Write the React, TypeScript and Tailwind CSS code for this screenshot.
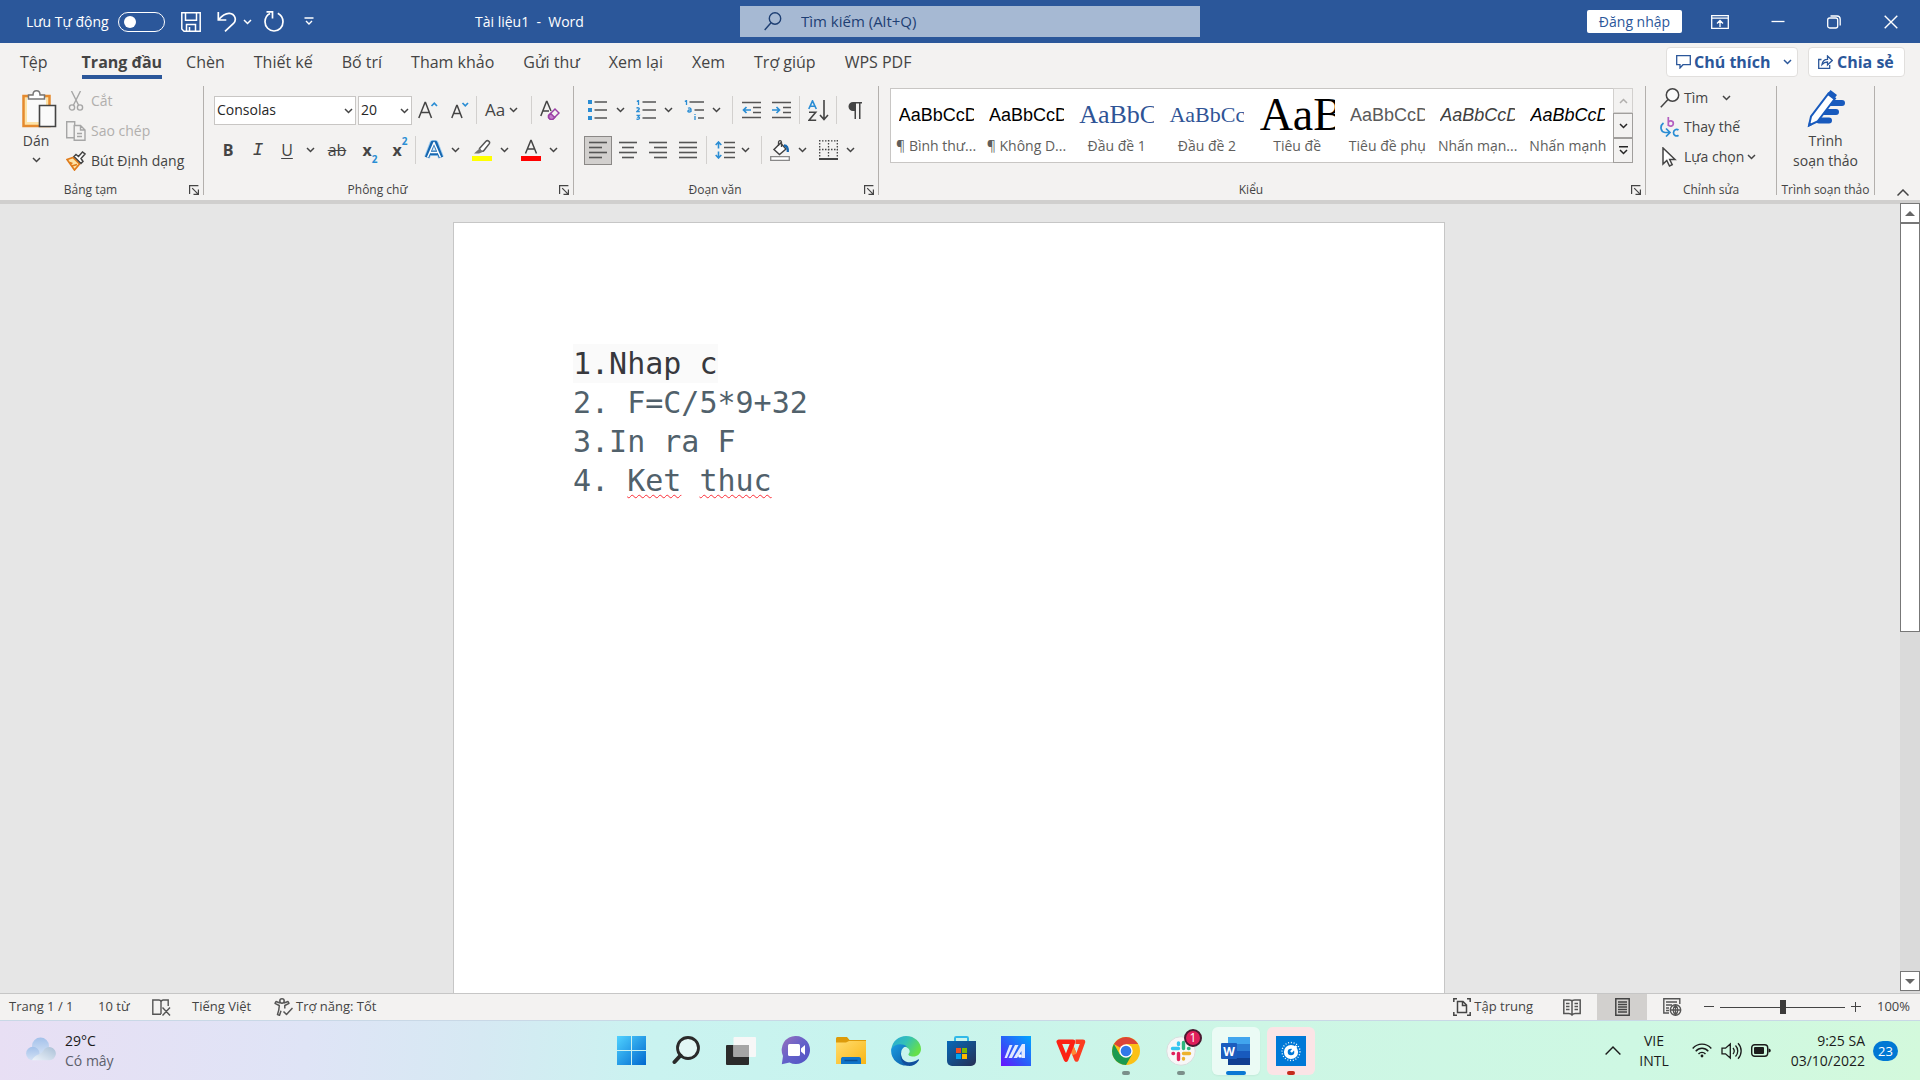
import React from "react";

type Kids = { children?: React.ReactNode; className?: string };

/* ---------- shared pieces ---------- */

function Chevron({ className = "" }: { className?: string }) {
  return (
    <svg className={`shrink-0 ${className}`} width="9" height="6" viewBox="0 0 9 6" fill="none" stroke="currentColor" strokeWidth="1.5" aria-hidden="true">
      <path d="M1 1l3.5 3.5L8 1" />
    </svg>
  );
}

function Tool({ label, className = "w-7", children }: Kids & { label: string }) {
  return (
    <button type="button" aria-label={label} className={`flex h-[30px] shrink-0 items-center justify-center ${className}`}>
      {children}
    </button>
  );
}

function Drop({ label, className = "w-4" }: { label: string; className?: string }) {
  return (
    <button type="button" aria-label={label} className={`flex h-[30px] shrink-0 items-center justify-center ${className}`}>
      <Chevron />
    </button>
  );
}

function Sep({ className = "" }: { className?: string }) {
  return <span className={`h-7 w-px shrink-0 bg-[#d2d0ce] ${className}`} />;
}

function Launcher() {
  return (
    <button type="button" aria-label="Thêm tùy chọn" className="absolute right-1 bottom-0">
      <svg width="10" height="10" viewBox="0 0 10 10" fill="none" stroke="#444" strokeWidth="1.2">
        <path d="M.6 9V.6H9.4M3.2 3.2L8.6 8.6M9.4 4.5v4.9H4.5" />
      </svg>
    </button>
  );
}

function Group({ title, className = "", launcher = false, children }: Kids & { title: string; launcher?: boolean }) {
  return (
    <section className={`relative flex h-[109px] flex-col border-r border-[#b3b0ad] ${className}`}>
      <div className="h-[96px] shrink-0">{children}</div>
      <h2 className="shrink-0 text-center text-xs leading-4 whitespace-nowrap text-[#444]">{title}</h2>
      {launcher && <Launcher />}
    </section>
  );
}

function Lines({ rows, className = "" }: { rows: number[][]; className?: string }) {
  return (
    <svg className={className} width="18" height="18" viewBox="0 0 18 18" stroke="#555" strokeWidth="1.6" aria-hidden="true">
      {rows.map(([a, b], i) => (
        <path key={i} d={`M${a} ${1.5 + i * 5}H${b}`} />
      ))}
    </svg>
  );
}

/* ---------- title bar ---------- */

function TitleBar() {
  return (
    <header className="grid h-[43px] grid-cols-[740fr_460fr_720fr] items-center bg-[#2b579a] text-sm text-white">
      <div className="flex items-center pl-[26px]">
        <label htmlFor="autosave" className="w-[92px] shrink-0 whitespace-nowrap">Lưu Tự động</label>
        <input
          id="autosave"
          type="checkbox"
          role="switch"
          className="h-5 w-[47px] shrink-0 appearance-none rounded-full border border-white before:mt-[3px] before:ml-[5px] before:block before:size-3 before:rounded-full before:bg-white"
        />
        <button type="button" aria-label="Lưu" className="ml-4">
          <svg width="20" height="20" viewBox="0 0 20 20" fill="none" stroke="#fff" strokeWidth="1.5">
            <path d="M.8.8h18.4v18.4H3L.8 17zM4.5.8v7.4h11V.8M5.5 19v-6.5h9V19M8.5 15v4" />
          </svg>
        </button>
        <button type="button" aria-label="Hoàn tác" className="ml-4">
          <svg width="20" height="21" viewBox="0 0 20 21" fill="none" stroke="#fff" strokeWidth="1.7">
            <path d="M1.3 1v8h8M1.5 8.7C5 4.5 8.5 2 12.5 2.3c5.500.5 7.500 6.500 4 10.200L8 20.300" />
          </svg>
        </button>
        <button type="button" aria-label="Tùy chọn hoàn tác" className="ml-1.5"><Chevron /></button>
        <button type="button" aria-label="Lặp lại" className="ml-3">
          <svg width="20" height="21" viewBox="0 0 20 21" fill="none" stroke="#fff" strokeWidth="1.7">
            <path d="M2.500.9h6v6.600M6 2.400C2.800 4 1 7 1 10.800c0 5 4 9.200 9 9.200s9-4 9-9.200c0-4-2-7-5.200-8.600" />
          </svg>
        </button>
        <button type="button" aria-label="Tùy chỉnh thanh công cụ" className="ml-5">
          <svg width="10" height="9" viewBox="0 0 10 9" fill="none" stroke="#fff" strokeWidth="1.4">
            <path d="M.5 1h9M2 4l3 3 3-3" />
          </svg>
        </button>
        <h1 className="ml-[161px] whitespace-pre">Tài liệu1  -  Word</h1>
      </div>
      <label className="flex h-[31px] items-center bg-[#a6b9d3] pl-6 text-[15px] text-[#1e3f73]">
        <svg width="18" height="19" viewBox="0 0 18 19" fill="none" stroke="currentColor" strokeWidth="1.4" aria-hidden="true">
          <circle cx="11" cy="6.500" r="5.700" />
          <path d="M7 10.700L.7 18" />
        </svg>
        <input type="search" aria-label="Tìm kiếm" placeholder="Tìm kiếm (Alt+Q)" className="ml-[19px] min-w-0 flex-1 bg-transparent outline-none placeholder:text-[#1e3f73]" />
      </label>
      <div className="flex items-center justify-end pr-[22px]">
        <button type="button" className="mr-[29px] h-[23px] w-[95px] rounded-xs bg-white text-[#2b579a]">Đăng nhập</button>
        <button type="button" aria-label="Tùy chọn hiển thị dải băng" className="mr-[42px]">
          <svg width="18" height="14" viewBox="0 0 18 14" fill="none" stroke="#fff" strokeWidth="1.3">
            <path d="M.7.7h16.600v12.600H.7zM.7 3.200h16.600M9 12V5.700M6 8.500l3-3 3 3" />
          </svg>
        </button>
        <button type="button" aria-label="Thu nhỏ" className="mr-[42px]">
          <svg width="14" height="14" viewBox="0 0 14 14" stroke="#fff" strokeWidth="1.3"><path d="M.5 6.500h13" /></svg>
        </button>
        <button type="button" aria-label="Khôi phục" className="mr-[43px]">
          <svg width="14" height="14" viewBox="0 0 14 14" fill="none" stroke="#fff" strokeWidth="1.3">
            <rect x=".7" y="3" width="10" height="10" rx="2" />
            <path d="M3.500 1h6.500A3.200 3.200 0 0113.200 4v6.500" />
          </svg>
        </button>
        <button type="button" aria-label="Đóng">
          <svg width="14" height="14" viewBox="0 0 14 14" stroke="#fff" strokeWidth="1.4"><path d="M.7.7l12.600 12.600M13.300.7L.7 13.300" /></svg>
        </button>
      </div>
    </header>
  );
}

/* ---------- tabs ---------- */

const tabs = ["Chèn", "Thiết kế", "Bố trí", "Tham khảo", "Gửi thư", "Xem lại", "Xem", "Trợ giúp", "WPS PDF"];

function Tabs() {
  return (
    <nav className="flex h-[43px] items-start justify-between pr-[15px] pl-5 text-base text-[#444]">
      <div className="flex items-start gap-[29px] pt-1">
        <button type="button" className="mr-[5px] h-[30px]">Tệp</button>
        <button type="button" className="-mr-[5px] h-8 border-b-4 border-[#2b579a] pt-0.5 font-bold whitespace-nowrap">Trang đầu</button>
        {tabs.map((t) => (
          <button key={t} type="button" className="h-[30px] whitespace-nowrap">{t}</button>
        ))}
      </div>
      <div className="flex gap-[10px] pt-1 font-bold whitespace-nowrap text-[#2b579a]">
        <button type="button" className="flex h-[30px] w-[132px] items-center rounded-sm border border-[#e1dfdd] bg-white pl-[9px]">
          <svg width="15" height="14" viewBox="0 0 15 14" fill="none" stroke="currentColor" strokeWidth="1.3"><path d="M.7.7h13.600v9H7L4 13V9.700H.7z" /></svg>
          <span className="ml-[3px]">Chú thích</span>
          <Chevron className="mr-[5px] ml-auto" />
        </button>
        <button type="button" className="flex h-[30px] w-[97px] items-center rounded-sm border border-[#e1dfdd] bg-white pl-[9px]">
          <svg width="15" height="14" viewBox="0 0 15 14" fill="none" stroke="currentColor" strokeWidth="1.3"><path d="M3.500 4.500H.7v8.800h11V10M4 9.500C4.500 6 7 4.300 9.500 4.300V1l4.700 4.500L9.500 10V7C7 7 5.500 7.800 4 9.500z" /></svg>
          <span className="ml-1">Chia sẻ</span>
        </button>
      </div>
    </nav>
  );
}

/* ---------- ribbon groups ---------- */

function Clipboard() {
  return (
    <Group title="Bảng tạm" launcher className="w-[204px] shrink-0 [&>h2]:mr-[22px]">
      <div className="flex pl-[17px]">
        <button type="button" className="flex w-[38px] shrink-0 flex-col items-center pt-1 text-sm text-[#444]">
          <svg className="ml-1.5 shrink-0" width="35" height="38" viewBox="0 0 35 38" fill="none">
            <path d="M1.500 6h26v30h-26z" fill="#fde3a7" stroke="#e58a2e" strokeWidth="2.500" />
            <path d="M5 8h19v24H5z" fill="#fafafa" />
            <path d="M6.500 9V5h4.500c0-2.500 1.500-4.200 3.500-4.200S18 2.500 18 5h4.500v4z" fill="#fff" stroke="#777" strokeWidth="1.500" />
            <path d="M17.500 15.500h16v21h-16z" fill="#fafafa" stroke="#444" strokeWidth="1.600" />
          </svg>
          <span className="mt-[3px] leading-5">Dán</span>
          <Chevron className="mt-1.5" />
        </button>
        <div className="ml-[10px] flex flex-col text-sm text-[#444]">
          <button type="button" className="flex h-[30px] items-center text-[#b1afad]">
            <svg className="mx-[3px]" width="16" height="20" viewBox="0 0 16 20" fill="none" stroke="#a6a6a6" strokeWidth="1.400">
              <path d="M3.500 0l7 14M12.500 0l-7 14" /><circle cx="4" cy="16.500" r="2.600" /><circle cx="12" cy="16.500" r="2.600" />
            </svg>
            <span className="ml-1">Cắt</span>
          </button>
          <button type="button" className="flex h-[30px] items-center text-[#b1afad]">
            <svg className="mx-px" width="20" height="20" viewBox="0 0 20 20" fill="#f3f2f1" stroke="#a6a6a6" strokeWidth="1.400">
              <path d="M.7.7h8v16H.7z" /><path d="M8.200 4.500h6.300l4.500 4.500v10.200H8.200zM14.500 4.500V9H19M11 12.500h5M11 15.500h5" />
            </svg>
            <span className="ml-1">Sao chép</span>
          </button>
          <button type="button" className="flex h-[30px] items-center whitespace-nowrap">
            <svg className="mx-px" width="20" height="20" viewBox="0 0 20 20" fill="none">
              <path d="M1 8.500l6-2 6.500 6.500-5 6z" fill="#fde3a7" stroke="#e07b1a" strokeWidth="1.700" />
              <path d="M3.500 11.500l3 1M6 15l5-1.500" stroke="#e07b1a" strokeWidth="1.400" />
              <path d="M8 5.500l2-2 2.500 2L16.500 1 19 3l-4 4.500 2 3-2 2z" fill="#fff" stroke="#444" strokeWidth="1.500" />
            </svg>
            <span className="ml-1">Bút Định dạng</span>
          </button>
        </div>
      </div>
    </Group>
  );
}

function Combo({ label, value, className }: { label: string; value: string; className: string }) {
  return (
    <div className={`relative h-[29px] shrink-0 ${className}`}>
      <select aria-label={label} className="size-full appearance-none border border-[#c8c6c4] bg-white pl-0.5 text-sm text-[#262626]">
        <option>{value}</option>
      </select>
      <Chevron className="pointer-events-none absolute top-3 right-[3px]" />
    </div>
  );
}

function FontGroup() {
  return (
    <Group title="Phông chữ" launcher className="w-[370px] shrink-0 text-[#444] [&>h2]:mr-[22px]">
      <div className="flex h-[44px] items-center pt-1 pl-[10px]">
        <Combo label="Phông" value="Consolas" className="w-[142px]" />
        <Combo label="Cỡ" value="20" className="ml-0.5 w-[54px]" />
        <Tool label="Tăng cỡ phông" className="w-8">
          <svg width="20" height="18" viewBox="0 0 20 18" fill="none" stroke="#444" strokeWidth="1.500"><path d="M.8 17L7 1.500h.5L13.500 17M3 11.500h8.500" /><path d="M13.500 5l2.800-2.800L19 5" stroke="#2a8dd4" strokeWidth="1.700" /></svg>
        </Tool>
        <Tool label="Giảm cỡ phông" className="w-8">
          <svg width="18" height="18" viewBox="0 0 18 18" fill="none" stroke="#444" strokeWidth="1.500"><path d="M.8 17L5.700 4.500h.5L11 17M2.500 12.500h7" /><path d="M11.500 2l2.800 2.800L17 2" stroke="#2a8dd4" strokeWidth="1.700" /></svg>
        </Tool>
        <Sep />
        <button type="button" className="flex h-[30px] w-[54px] items-center gap-1 pl-2 text-[17px]">Aa<Chevron /></button>
        <Sep />
        <Tool label="Xóa định dạng" className="w-9">
          <svg width="20" height="20" viewBox="0 0 20 20" fill="none" stroke="#444" strokeWidth="1.500"><path d="M.8 16L6.500 1.500H7L11 11M3 11h6" /><path d="M8.500 15.500l6.500-6.500 4 4-6.500 6.500h-2L8.500 17.500z" fill="#f3f2f1" stroke="#9b3fa5" /><path d="M8.700 15.500l2-2 4 4-2.200 2h-2l-1.800-1.800z" fill="#c47fcc" stroke="#9b3fa5" /></svg>
        </Tool>
      </div>
      <div className="flex h-10 items-center pl-[9px]">
        <Tool label="Đậm" className="w-[30px]"><b className="text-base">B</b></Tool>
        <Tool label="Nghiêng" className="w-[30px]"><i className="font-['Liberation_Mono'] text-lg">I</i></Tool>
        <Tool label="Gạch dưới"><span className="text-base underline underline-offset-2">U</span></Tool>
        <Drop label="Kiểu gạch dưới" className="w-[18px]" />
        <Tool label="Gạch ngang" className="w-9"><s className="px-px text-base">ab</s></Tool>
        <Tool label="Chỉ số dưới" className="ml-px w-7">
          <span className="flex items-end leading-5"><b className="text-base">x</b><b className="mb-[-7px] text-[10px] text-[#2a8dd4]">2</b></span>
        </Tool>
        <Tool label="Chỉ số trên" className="ml-px w-[30px]">
          <span className="flex items-start leading-5"><b className="text-base">x</b><b className="mt-[-7px] text-[10px] text-[#2a8dd4]">2</b></span>
        </Tool>
        <Sep />
        <Tool label="Hiệu ứng văn bản" className="ml-0.5 w-8">
          <svg width="20" height="20" viewBox="0 0 20 20" fill="none" strokeLinejoin="round"><path d="M3 17.500L8.500 3h3L17 17.500M6 13h8" stroke="#9fcdf0" strokeWidth="6" /><path d="M3 17.500L8.700 3h2.600L17 17.500M6 13h8" stroke="#1667b0" strokeWidth="4.400" /><path d="M3.500 17.500L10 2.500l6.500 15M6.500 12.500h7" stroke="#fff" strokeWidth="1.500" /></svg>
        </Tool>
        <Drop label="Thêm hiệu ứng" className="w-[10px]" />
        <Tool label="Màu tô sáng" className="ml-2 w-7">
          <svg width="20" height="22" viewBox="0 0 20 22" fill="none"><path d="M0 17h20v5H0z" fill="#ff0" /><path d="M7.500 9.500L14 2.300c1.500-1.500 4.500 0 3.300 2.300L11.500 12l-3 .5z" fill="#fff" stroke="#555" strokeWidth="1.500" /><path d="M7.500 9.500L11 12.700 7 14.500H2z" fill="#777" /></svg>
        </Tool>
        <Drop label="Chọn màu tô sáng" />
        <Tool label="Màu phông" className="ml-[5px] w-7">
          <svg width="20" height="22" viewBox="0 0 20 22" fill="none"><path d="M0 17h20v5H0z" fill="red" /><path d="M4.500 14.500L9.800 1.500h.4l5.300 13M6.500 10h7" stroke="#444" strokeWidth="1.500" /></svg>
        </Tool>
        <Drop label="Chọn màu phông" />
      </div>
    </Group>
  );
}

const blue = "#2a8dd4";

function Paragraph() {
  return (
    <Group title="Đoạn văn" launcher className="w-[305px] shrink-0 text-[#444] [&>h2]:mr-[22px]">
      <div className="flex h-[44px] items-center pt-1 pl-[10px]">
        <Tool label="Dấu đầu dòng">
          <svg width="20" height="20" viewBox="0 0 20 20"><path d="M0 0h4v4H0zM0 8h4v4H0zM0 16h4v4H0z" fill={blue} /><path d="M6.500 2H19M6.500 10H19M6.500 18H19" stroke="#555" strokeWidth="1.500" /></svg>
        </Tool>
        <Drop label="Kiểu dấu đầu dòng" />
        <Tool label="Đánh số" className="ml-1 w-7">
          <svg width="20" height="20" viewBox="0 0 20 20"><path d="M.8 1.500L2.500.5V5M.5 8.200c1-.8 3-.5 2.800.8L.8 11.500h3M.5 15.300h2.800L2 17c2 0 2 2.300-.3 2.300L.5 19" stroke={blue} strokeWidth="1.300" fill="none" /><path d="M6.500 2H20M6.500 10H20M6.500 18H20" stroke="#555" strokeWidth="1.500" /></svg>
        </Tool>
        <Drop label="Kiểu đánh số" />
        <Tool label="Danh sách đa mức" className="ml-1 w-7">
          <svg width="20" height="20" viewBox="0 0 20 20"><path d="M.8 1.500L2.500.5V5M4 8.300c1.500-.8 3-.3 3 1V12M7 10c-4-.3-3.700 2.200-1.800 2 .8 0 1.800-.6 1.800-1.300M11 14v1M11 16v4" stroke={blue} strokeWidth="1.300" fill="none" /><path d="M5.500 2H20M10.500 10H20M14 18h6" stroke="#555" strokeWidth="1.500" /></svg>
        </Tool>
        <Drop label="Kiểu đa mức" />
        <Sep className="ml-2" />
        <Tool label="Giảm thụt lề" className="ml-0.5 w-8">
          <svg width="19" height="18" viewBox="0 0 19 18" fill="none" stroke="#555" strokeWidth="1.500"><path d="M0 1.500h19M11 6.500h8M11 11.500h8M0 16.500h19" /><path d="M9 9H1.500M4.500 6L1.500 9l3 3" stroke={blue} strokeWidth="1.700" /></svg>
        </Tool>
        <Tool label="Tăng thụt lề">
          <svg width="19" height="18" viewBox="0 0 19 18" fill="none" stroke="#555" strokeWidth="1.500"><path d="M0 1.500h19M11 6.500h8M11 11.500h8M0 16.500h19" /><path d="M0 9h7.500M4.500 6l3 3-3 3" stroke={blue} strokeWidth="1.700" /></svg>
        </Tool>
        <Sep className="ml-1" />
        <Tool label="Sắp xếp" className="w-9">
          <svg width="21" height="21" viewBox="0 0 21 21" fill="none" strokeWidth="1.600"><path d="M.8 9L4.500.8 8.300 9M2 6.300h5" stroke={blue} /><path d="M1 12.300h6.700L1 20.200h7.200M16 0v19M12 15l4 4.500 4-4.500" stroke="#444" /></svg>
        </Tool>
        <Sep />
        <Tool label="Hiện dấu đoạn" className="w-9">
          <svg width="14" height="17" viewBox="0 0 14 17" fill="#444"><path d="M5 0h9v1.500h-1.500V17H11V1.500H8V17H6.500V9H5a4.500 4.500 0 010-9z" /></svg>
        </Tool>
      </div>
      <div className="flex h-10 items-center pl-[10px]">
        <button type="button" aria-label="Căn trái" className="flex h-[29px] w-7 shrink-0 items-center justify-center border border-[#8a8886] bg-[#d2d0ce]">
          <Lines rows={[[0, 18], [0, 13], [0, 18], [0, 13]]} />
        </button>
        <Tool label="Căn giữa" className="ml-0.5 w-7"><Lines rows={[[0, 18], [3, 15], [0, 18], [3, 15]]} /></Tool>
        <Tool label="Căn phải" className="ml-0.5 w-7"><Lines rows={[[0, 18], [5, 18], [0, 18], [5, 18]]} /></Tool>
        <Tool label="Căn đều" className="ml-0.5 w-7"><Lines rows={[[0, 18], [0, 18], [0, 18], [0, 18]]} /></Tool>
        <Sep className="ml-1" />
        <Tool label="Giãn cách dòng" className="ml-1 w-7">
          <svg width="20" height="18" viewBox="0 0 20 18" fill="none" stroke="#555" strokeWidth="1.600"><path d="M9 1.500h11M9 6.500h11M9 11.500h11M9 16.500h11" /><path d="M3.500 1v6.500M.7 4l2.800-3 2.800 3M3.500 10.500V17M.7 14l2.800 3 2.800-3" stroke={blue} /></svg>
        </Tool>
        <Drop label="Tùy chọn giãn cách" className="w-3" />
        <Sep className="ml-[10px]" />
        <Tool label="Tô bóng" className="ml-1 w-7">
          <svg width="20" height="21" viewBox="0 0 20 21" fill="none"><path d="M.7 16.700h18.600v3.600H.7z" fill="#fff" stroke="#888" strokeWidth="1.300" /><path d="M4 9.500L10.500 3l5.500 6-6.500 5.500z" fill="#fff" stroke="#444" strokeWidth="1.500" /><path d="M8.500 6V2.500c0-2.500 3-2.500 3 0V7" stroke="#444" strokeWidth="1.300" /><path d="M14 5.500c3 0 4 2 3.800 6.500" stroke="#1667b0" strokeWidth="2.300" /></svg>
        </Tool>
        <Drop label="Màu tô bóng" />
        <Tool label="Viền" className="ml-1 w-7">
          <svg width="19" height="20" viewBox="0 0 19 20" fill="none" stroke="#444" strokeWidth="1.300"><path d="M0 .8h19M0 9.500h19M.7 0v18M9.500 0v18M18.300 0v18" strokeDasharray="1.500 1.500" /><path d="M0 19h19" strokeWidth="2" /></svg>
        </Tool>
        <Drop label="Kiểu viền" />
      </div>
    </Group>
  );
}

const styleItems = [
  { name: "¶ Bình thư...", sample: "AaBbCcD", look: "text-lg text-black" },
  { name: "¶ Không D...", sample: "AaBbCcD", look: "text-lg text-black" },
  { name: "Đầu đề 1", sample: "AaBbC", look: "font-['Liberation_Serif'] text-[26px] text-[#2f5496]" },
  { name: "Đầu đề 2", sample: "AaBbCc", look: "font-['Liberation_Serif'] text-[22px] text-[#2f5496]" },
  { name: "Tiêu đề", sample: "AaB", look: "font-['Liberation_Serif'] text-[46px] text-black" },
  { name: "Tiêu đề phụ", sample: "AaBbCcD", look: "text-lg text-[#5a5a5a]" },
  { name: "Nhấn mạn...", sample: "AaBbCcD", look: "text-lg text-[#404040] italic" },
  { name: "Nhấn mạnh", sample: "AaBbCcD", look: "text-lg text-black italic" },
];

function Styles() {
  return (
    <Group title="Kiểu" launcher className="min-w-0 flex-1 [&>h2]:mr-[22px]">
      <div className="pt-0.5 pr-3 pl-[11px]">
        <div className="flex h-[75px] border border-[#c8c6c4] bg-white">
          <div className="flex min-w-0 flex-1">
            {styleItems.map((s) => (
              <button key={s.name} type="button" className="flex min-w-0 flex-1 flex-col items-center overflow-hidden">
                <span className={`mt-1.5 h-10 w-[75px] shrink-0 overflow-hidden text-left leading-10 whitespace-nowrap ${s.look.includes("Serif") ? "" : "font-['Liberation_Sans']"} ${s.look}`}>{s.sample}</span>
                <span className="mt-px shrink-0 text-sm leading-5 whitespace-nowrap text-[#605e5c]">{s.name}</span>
              </button>
            ))}
          </div>
          <div className="-my-px -mr-px flex w-5 flex-col text-[#262626]">
            <button type="button" aria-label="Lên" className="flex flex-1 items-center justify-center border border-[#d2d0ce] bg-[#f3f2f1] text-[#b1afad]"><Chevron className="rotate-180" /></button>
            <button type="button" aria-label="Xuống" className="flex flex-1 items-center justify-center border border-[#a19f9d] bg-[#f3f2f1]"><Chevron /></button>
            <button type="button" aria-label="Xem thêm" className="flex flex-1 items-center justify-center border border-[#a19f9d] bg-[#f3f2f1]">
              <svg width="9" height="9" viewBox="0 0 9 9" fill="none" stroke="currentColor" strokeWidth="1.500"><path d="M0 .8h9M1 4l3.500 3.500L8 4" /></svg>
            </button>
          </div>
        </div>
      </div>
    </Group>
  );
}

function Editing() {
  return (
    <Group title="Chỉnh sửa" className="w-[131px] shrink-0 text-sm text-[#444]">
      <div className="flex flex-col pl-[14px]">
        <button type="button" className="flex h-6 items-center">
          <svg width="20" height="20" viewBox="0 0 20 20" fill="none" stroke="#444" strokeWidth="1.500"><circle cx="12.500" cy="7" r="6.200" fill="#fafafa" /><path d="M8 11.500L.8 19.200" /></svg>
          <span className="ml-1">Tìm</span><Chevron className="ml-[14px]" />
        </button>
        <button type="button" className="mt-0.5 flex h-[30px] items-center">
          <svg width="20" height="20" viewBox="0 0 20 20" fill="none" strokeWidth="1.700"><path d="M8.300 0v9M8.300 5.500c1-2.500 5-2 5 1s-4 3.500-5 1.200" stroke="#b45fc0" /><path d="M18.500 13c-2-1.500-5-.3-5 2.700s3 4 5 2.500M3.500 6c-4 3-3 9 1.500 9.500h4M6 11.500l4 4-4 4" stroke={blue} /></svg>
          <span className="ml-1">Thay thế</span>
        </button>
        <button type="button" className="flex h-[29px] items-center whitespace-nowrap">
          <svg width="20" height="20" viewBox="0 0 20 20" fill="#fff" stroke="#444" strokeWidth="1.500"><path d="M3 1v16l3.800-3.500L9.500 19l2.700-1.300L9.700 12.500H15z" /></svg>
          <span className="ml-1">Lựa chọn</span><Chevron className="ml-[3px]" />
        </button>
      </div>
    </Group>
  );
}

function Editor() {
  return (
    <Group title="Trình soạn thảo" className="w-[98px] shrink-0 text-sm text-[#444]">
      <button type="button" className="flex w-full flex-col items-center pt-[3px]">
        <svg width="38" height="39" viewBox="0 0 38 39">
          <path d="M22 14h13M17 23h12M12 31.500h10" stroke="#185abd" strokeWidth="6" strokeLinecap="round" />
          <path d="M2 36.500l2-9L21.500 4.500l6.500 5L10.500 32.500z" fill="#fff" stroke="#185abd" strokeWidth="2" />
          <path d="M20 5.500L23.500 1l6.500 5-3.500 4.500zM1 38l1-5 3.500 2.800z" fill="#185abd" />
        </svg>
        <span className="mt-[3px] leading-5">Trình<br />soạn thảo</span>
      </button>
    </Group>
  );
}

/* ---------- document ---------- */

function Workspace() {
  return (
    <main className="flex min-h-0 flex-1 border-t-4 border-[#d0cfce] bg-[#e6e6e6]">
      <div className="flex min-w-0 flex-1 justify-center overflow-hidden pt-[18px] pr-0.5">
        <article className="w-[992px] border border-b-0 border-[#c6c6c6] bg-white px-[119px] pt-[121px] font-['DejaVu_Sans_Mono'] text-[30px] leading-[39px] text-[#51616b]">
          <p><span className="inline-block bg-[#fafafa] text-[#38383d]">1.Nhap c</span></p>
          <p>2. F=C/5*9+32</p>
          <p>3.In ra F</p>
          <p>
            4. <span className="underline decoration-red-500 decoration-wavy decoration-1 underline-offset-3">Ket</span>{" "}
            <span className="underline decoration-red-500 decoration-wavy decoration-1 underline-offset-3">thuc</span>
          </p>
        </article>
      </div>
      <div className="flex w-5 shrink-0 flex-col bg-[#dadada] pb-0.5">
        <button type="button" aria-label="Cuộn lên" className="-mt-px flex h-5 shrink-0 items-center justify-center border border-[#777] bg-white">
          <svg width="10" height="5" viewBox="0 0 10 5" fill="#666"><path d="M0 5l5-5 5 5z" /></svg>
        </button>
        <div className="h-[52%] border border-[#777] bg-white" />
        <button type="button" aria-label="Cuộn xuống" className="mt-auto flex h-5 shrink-0 items-center justify-center border border-[#777] bg-white">
          <svg width="10" height="5" viewBox="0 0 10 5" fill="#666"><path d="M0 0l5 5 5-5z" /></svg>
        </button>
      </div>
    </main>
  );
}

/* ---------- status bar ---------- */

function StatusBar() {
  return (
    <footer className="flex h-[27px] shrink-0 items-center justify-between border-t border-[#c6c6c6] bg-[#f3f2f1] text-[13px] whitespace-nowrap text-[#444]">
      <div className="flex items-center pl-[9px]">
        <span className="w-[89px]">Trang 1 / 1</span>
        <span className="w-[54px]">10 từ</span>
        <button type="button" aria-label="Soát lỗi" className="w-10">
          <svg width="19" height="17" viewBox="0 0 19 17" fill="none" stroke="#555" strokeWidth="1.400"><path d="M9 15.300H.8V1h6c1.500 0 2.200 1 2.200 2v12M9 3c0-1 1-2 2.200-2h5v6M10.500 8.500l7.500 8M18 8.500l-7.500 8" /></svg>
        </button>
        <span className="w-[82px]">Tiếng Việt</span>
        <button type="button" className="flex items-center gap-[3px]">
          <svg width="19" height="18" viewBox="0 0 19 18" fill="none" stroke="#555" strokeWidth="1.500" strokeLinejoin="round"><circle cx="8" cy="3" r="2.200" /><path d="M6 5L2 3.500 1 5.300l4.200 2.200c.3 3-.7 6-1.700 9l2 .7 1.500-4.500M10 5l4-1.500 1 1.800-4.200 2.200v3M9.500 13.500l3 3 6-6.500" /></svg>
          Trợ năng: Tốt
        </button>
      </div>
      <div className="flex h-full items-center pr-2.5">
        <button type="button" className="flex items-center gap-[3px]">
          <svg width="18" height="18" viewBox="0 0 18 18" fill="none" stroke="#444" strokeWidth="1.500"><path d="M4 .8H.8V4M14 .8h3.200V4M4 17.200H.8V14M14 17.200h3.200V14M4.500 3.500H10l3.500 3.500v7.500h-9zM9.500 3.500v4h4" /></svg>
          Tập trung
        </button>
        <button type="button" aria-label="Chế độ đọc" className="ml-[14px] flex h-full w-[50px] items-center justify-center">
          <svg width="18" height="17" viewBox="0 0 18 17" fill="none" stroke="#555" strokeWidth="1.500"><path d="M9 2.500v13M.8 1h5.500C8 1 9 1.700 9 2.500 9 1.700 10 1 11.700 1h5.500v13.500h-5c-2 0-3.200 1.500-3.200 1.500s-1.200-1.500-3.200-1.500h-5zM3 4.500h3.500M3 7.500h3.500M3 10.500h3.500M11.500 4.500H15M11.500 7.500H15M11.500 10.500H15" /></svg>
        </button>
        <button type="button" aria-label="Bố trí in" className="flex h-full w-[50px] items-center justify-center bg-[#d2d0ce]">
          <svg width="15" height="18" viewBox="0 0 15 18" fill="none" stroke="#444" strokeWidth="1.500"><path d="M.8.8h13.400v16.400H.8zM3 4h9M3 6.500h9M3 9h9M3 11.500h9M3 14h9" /></svg>
        </button>
        <button type="button" aria-label="Bố trí web" className="flex h-full w-[50px] items-center justify-center">
          <svg width="19" height="18" viewBox="0 0 19 18" fill="none" stroke="#555" strokeWidth="1.400"><path d="M6 15H.8V.8h16V6M3 4h11M3 7h6M3 10h3M3 12.500h3" /><circle cx="12.500" cy="12" r="5.200" fill="#f3f2f1" /><path d="M12.500 7v10M7.500 12h10M12.500 7c-3 3-3 7 0 10 3-3 3-7 0-10" /></svg>
        </button>
        <button type="button" aria-label="Thu nhỏ" className="ml-[7px]"><svg width="10" height="10" viewBox="0 0 10 10" stroke="#444"><path d="M0 4.500h10" /></svg></button>
        <input
          type="range"
          aria-label="Thu phóng"
          defaultValue={50}
          className="mx-1.5 h-4 w-[125px] appearance-none bg-[linear-gradient(#444,#444)] bg-[length:100%_1px] bg-center bg-no-repeat [&::-webkit-slider-thumb]:h-[14px] [&::-webkit-slider-thumb]:w-1.5 [&::-webkit-slider-thumb]:appearance-none [&::-webkit-slider-thumb]:bg-[#3b3a39]"
        />
        <button type="button" aria-label="Phóng to"><svg width="10" height="10" viewBox="0 0 10 10" stroke="#444"><path d="M0 4.500h10M4.500 0v10" /></svg></button>
        <span className="w-[49px] text-right">100%</span>
      </div>
    </footer>
  );
}

/* ---------- taskbar ---------- */

function TaskButton({ label, className = "", dot, children }: Kids & { label: string; dot?: string }) {
  return (
    <button type="button" aria-label={label} className={`relative flex size-12 items-center justify-center rounded-md ${className}`}>
      {children}
      {dot && <span className={`absolute bottom-0 h-1 rounded-full ${dot}`} />}
    </button>
  );
}

function Taskbar() {
  return (
    <footer className="grid h-[60px] shrink-0 grid-cols-[1fr_auto_1fr] items-center border-t border-[#c9d8e6] bg-[linear-gradient(95deg,#e8dff4_0%,#dfe4f6_16%,#d6e9f3_25%,#caf3f0_34%,#c8f4ee_45%,#cdf6e5_65%,#cef8e3_85%,#d3f9dc_100%)] text-sm text-[#1b1b1b]">
      <button type="button" className="flex items-center pl-[26px] text-left">
        <svg className="mb-1" width="30" height="24" viewBox="0 0 30 24">
          <defs>
            <linearGradient id="cl1" x1="0" y1="0" x2="0" y2="1"><stop stopColor="#a3c1ea" /><stop offset="1" stopColor="#d3e1f5" /></linearGradient>
            <linearGradient id="cl2" x1="1" y1="0" x2="0" y2="1"><stop stopColor="#a9bfd6" /><stop offset="1" stopColor="#eef4fb" /></linearGradient>
          </defs>
          <circle cx="14.500" cy="9" r="8.500" fill="url(#cl1)" />
          <circle cx="6.800" cy="16.500" r="6.700" fill="url(#cl1)" />
          <path d="M6 23.200h17.500a6.600 6.600 0 10-6.300-9.200C15 18 9 17 6 23.200z" fill="url(#cl2)" />
        </svg>
        <span className="ml-[9px] leading-5">29°C<br /><span className="text-[#5c5f6b]">Có mây</span></span>
      </button>
      <nav className="flex gap-[7px] pl-0.5">
        <TaskButton label="Bắt đầu">
          <svg width="29" height="29" viewBox="0 0 29 29"><defs><linearGradient id="win" x1="0" y1="0" x2="1" y2="1"><stop stopColor="#50d2ff" /><stop offset="1" stopColor="#0068cf" /></linearGradient></defs><path d="M0 0h14v14H0zM15 0h14v14H15zM0 15h14v14H0zM15 15h14v14H15z" fill="url(#win)" /></svg>
        </TaskButton>
        <TaskButton label="Tìm kiếm">
          <svg width="28" height="29" viewBox="0 0 28 29" fill="none" stroke="#2a2a2a"><circle cx="16" cy="12" r="10.500" strokeWidth="2.800" fill="#e3f7f5" /><path d="M8.500 19.500L2.500 26" strokeWidth="4" strokeLinecap="round" /></svg>
        </TaskButton>
        <TaskButton label="Chế độ xem tác vụ">
          <svg width="30" height="28" viewBox="0 0 30 28"><rect y="8" width="23" height="20" rx="1" fill="#2b2b2b" /><rect x="7.500" width="22.500" height="20" rx="1" fill="#f7f7f7" /><path d="M7.500 8H23v12H7.500z" fill="#a5a5a5" /></svg>
        </TaskButton>
        <TaskButton label="Trò chuyện">
          <svg width="30" height="29" viewBox="0 0 30 29"><defs><linearGradient id="chat" x1="0" y1="0" x2="1" y2="1"><stop stopColor="#9a70bd" /><stop offset=".5" stopColor="#6461c9" /><stop offset="1" stopColor="#4f52c4" /></linearGradient></defs><path d="M15 0a14 14 0 11-6.500 26.400L.8 28.200 2 20A14 14 0 0115 0z" fill="url(#chat)" /><rect x="7" y="8" width="12" height="12" rx="1.500" fill="#fff" /><path d="M20 12.500l4-3.500v10l-4-3.500z" fill="#fff" /></svg>
        </TaskButton>
        <TaskButton label="File Explorer">
          <svg width="30" height="27" viewBox="0 0 30 27"><defs><linearGradient id="fol" x1="0" y1="0" x2="1" y2="1"><stop stopColor="#ffdc6e" /><stop offset="1" stopColor="#f9b615" /></linearGradient></defs><path d="M0 1.500C0 .7.7 0 1.500 0H11l2.500 3H30v6H0z" fill="#dd9b0a" /><path d="M0 5.500h10L13 4h17v23H0z" fill="url(#fol)" /><path d="M5 27v-5c0-1.500 1-2 2-2h16c1 0 2 .7 2 2v5z" fill="#0f74c9" /><path d="M8.500 23.500h13" stroke="#0a4e94" strokeWidth="1.500" /></svg>
        </TaskButton>
        <TaskButton label="Edge">
          <svg width="30" height="30" viewBox="0 0 30 30"><defs><linearGradient id="ed1" x1="0" y1="0" x2="1" y2=".5"><stop stopColor="#28a8d8" /><stop offset=".5" stopColor="#33c0b8" /><stop offset="1" stopColor="#66e04a" /></linearGradient><linearGradient id="ed2" x1="0" y1="0" x2="1" y2="1"><stop stopColor="#1b9de2" /><stop offset="1" stopColor="#0c59a4" /></linearGradient></defs><path d="M.3 13C1.500 5 8 0 15 0c9 0 15 6.500 15 13 0 5-4 7.500-7.500 7.500-4 0-5.500-1.500-5-2.500 1.500-1.500 1.500-3 .5-4.700C15.500 9.500 6 7 .3 13z" fill="url(#ed1)" /><path d="M.2 13C3 8 11 6.500 16 10.500c-4 0-6 3.500-6 7 0 6 5 12.500 10 11.300A15 15 0 01.2 13z" fill="url(#ed2)" /><path d="M10.500 15c-3 9 7 15 16.500 8.500.8-.7 1.300.2.8 1-3 4.500-7.500 6-11.300 5.300C10.500 28.500 8 20 10.500 15z" fill="#114f9e" /></svg>
        </TaskButton>
        <TaskButton label="Microsoft Store">
          <svg width="29" height="30" viewBox="0 0 29 30"><defs><linearGradient id="st" x1="0" y1="0" x2="1" y2="1"><stop stopColor="#0669b8" /><stop offset="1" stopColor="#272f54" /></linearGradient></defs><path d="M8 6V2.200C8 1.500 8.500 1 9.200 1h10.600c.7 0 1.200.5 1.200 1.200V6" fill="none" stroke="#31b9e8" strokeWidth="2" /><path d="M0 5h29v20a5 5 0 01-5 5H5a5 5 0 01-5-5z" fill="url(#st)" /><path d="M9 12h5v5H9z" fill="#f25022" /><path d="M15 12h5v5h-5z" fill="#7fba00" /><path d="M9 18h5v5H9z" fill="#00a4ef" /><path d="M15 18h5v5h-5z" fill="#ffb900" /></svg>
        </TaskButton>
        <TaskButton label="MyASUS">
          <svg width="30" height="30" viewBox="0 0 30 30"><defs><linearGradient id="as" x1="0" y1="1" x2="1" y2="0"><stop stopColor="#6a11ff" /><stop offset=".4" stopColor="#3153f8" /><stop offset="1" stopColor="#00a7ff" /></linearGradient></defs><path d="M0 0h30v30H0z" fill="url(#as)" /><path d="M8.500 9h3L6 22H3.500zM14 9h3.500L11 22H7.500zM21 8h3v14h-3.500v-7L16 22h-3.500z" fill="#dfe8ff" /><circle cx="19" cy="20" r="1.800" fill="#fff" /></svg>
        </TaskButton>
        <TaskButton label="WPS Office">
          <svg width="30" height="24" viewBox="0 0 30 24" fill="none" strokeWidth="4.600" strokeLinejoin="round">
            <path d="M19.500 2.800H27L20.500 20.500 15.500 8" stroke="#fc3d21" />
            <path d="M15.500 8l3 7.500" stroke="#ff8a35" />
            <path d="M2.800 2.800H17L10 20.500z" stroke="#fb2214" />
          </svg>
        </TaskButton>
        <TaskButton label="Chrome" dot="w-2 bg-[#7b8f8a]">
          <svg width="28" height="28" viewBox="0 0 28 28"><circle cx="14" cy="14" r="14" fill="#fbc116" /><path d="M14 14L1.900 7A14 14 0 0126.100 7H14z" fill="#dc4437" /><path d="M14 14l6 3.500L14 28A14 14 0 011.900 7l6 10.500z" fill="#1b9a50" /><circle cx="14" cy="14" r="6.700" fill="#fff" /><circle cx="14" cy="14" r="5.300" fill="#3079e8" /></svg>
        </TaskButton>
        <TaskButton label="Slack" dot="w-2 bg-[#7b8f8a]">
          <svg width="30" height="30" viewBox="0 0 30 30" strokeWidth="3.400" strokeLinecap="round"><circle cx="15" cy="15" r="14.300" fill="#f7f7f7" stroke="#d8dede" strokeWidth="1" /><path d="M12.500 12.500h-6M12.500 7v1.500" stroke="#36c5f0" /><path d="M17.500 6.500v6M22.500 12.500h.5" stroke="#2eb67d" /><path d="M17.500 17.500h6M17.500 22.500v.5" stroke="#ecb22e" /><path d="M12.500 17.500v6M7.500 17.500H7" stroke="#e01e5a" /></svg>
          <span className="absolute top-0.5 right-[3px] size-[18px] rounded-full border-2 border-[#4a1930] bg-[#e01e5a] text-center text-xs leading-[14px] text-white">1</span>
        </TaskButton>
        <TaskButton label="Word" className="bg-white/60 shadow-xs" dot="w-5 bg-[#0a78d4]">
          <svg width="30" height="28" viewBox="0 0 30 28"><path d="M7 0h22v7H7z" fill="#41a5ee" /><path d="M7 7h22v7H7z" fill="#2b7cd3" /><path d="M7 14h22v7H7z" fill="#185abd" /><path d="M7 21h22v7H7z" fill="#103f91" /><rect y="6" width="16" height="16" rx="1" fill="#1b5cbe" /><text x="8" y="18.500" textAnchor="middle" fontSize="12" fontWeight="700" fill="#fff">W</text></svg>
        </TaskButton>
        <TaskButton label="Trợ lý thiết bị" className="bg-[#fbe4e6]" dot="w-2 bg-[#c42b1c]">
          <svg width="30" height="30" viewBox="0 0 30 30"><path d="M0 0h30v30H0z" fill="#0078d7" /><circle cx="15" cy="15.500" r="9" fill="none" stroke="#fff" strokeWidth="1.300" strokeDasharray="1 1.800" /><circle cx="15" cy="16" r="5.200" fill="none" stroke="#fff" strokeWidth="3.800" /><path d="M15 16l5.500-6" stroke="#fff" strokeWidth="2.500" /></svg>
        </TaskButton>
      </nav>
      <div className="flex items-center justify-end pr-[22px] leading-5">
        <button type="button" aria-label="Biểu tượng ẩn" className="mr-[18px]"><svg width="16" height="9" viewBox="0 0 16 9" fill="none" stroke="#1b1b1b" strokeWidth="1.400"><path d="M.6 8.500L8 1l7.400 7.500" /></svg></button>
        <button type="button" className="w-[30px]">VIE<br />INTL</button>
        <button type="button" className="ml-[23px] flex items-center gap-[9px]" aria-label="Mạng, âm lượng, pin">
          <svg width="20" height="15" viewBox="0 0 20 15" fill="none" stroke="#1b1b1b" strokeWidth="1.400"><path d="M.7 5.500c5-5.800 13.600-5.800 18.600 0M3.700 8.300c3.500-4 9.100-4 12.600 0M6.500 11c2-2.200 5-2.200 7 0" /><circle cx="10" cy="13" r="1.400" fill="#1b1b1b" stroke="none" /></svg>
          <svg width="21" height="18" viewBox="0 0 21 18" fill="none" stroke="#1b1b1b" strokeWidth="1.300"><path d="M1 6.200h3.500L9.300 2v14l-4.800-4.200H1zM12 6c1.500 1.800 1.500 4.200 0 6M14.500 3.500c3 3 3 8 0 11M17 1.300c4.200 4.200 4.200 11.200 0 15.400" /></svg>
          <svg width="20" height="13" viewBox="0 0 20 13"><rect x=".7" y=".7" width="16" height="11.600" rx="3" fill="none" stroke="#1b1b1b" strokeWidth="1.400" /><rect x="3" y="3" width="10" height="7" rx="1" fill="#1b1b1b" /><path d="M17.500 4.500c3 0 3 4 0 4z" fill="#1b1b1b" /></svg>
        </button>
        <button type="button" className="ml-4 w-[78px] text-right whitespace-nowrap">9:25 SA<br />03/10/2022</button>
        <span className="ml-2 h-5 w-[25px] rounded-full bg-[#0078d4] text-center text-[13px] leading-5 text-white">23</span>
      </div>
    </footer>
  );
}

export default function App() {
  return (
    <div className="flex h-screen flex-col overflow-hidden bg-[#f3f2f1] font-['Open_Sans','Noto_Sans',sans-serif]">
      <TitleBar />
      <Tabs />
      <div className="flex h-[114px] shrink-0">
        <Clipboard />
        <FontGroup />
        <Paragraph />
        <Styles />
        <Editing />
        <Editor />
        <div className="flex w-[45px] shrink-0 items-end justify-center pb-1 pl-[11px] text-[#444]">
          <button type="button" aria-label="Thu gọn dải băng"><svg width="12" height="7" viewBox="0 0 12 7" fill="none" stroke="#444" strokeWidth="1.500"><path d="M.5 6.500L6 1l5.500 5.500" /></svg></button>
        </div>
      </div>
      <Workspace />
      <StatusBar />
      <Taskbar />
    </div>
  );
}
